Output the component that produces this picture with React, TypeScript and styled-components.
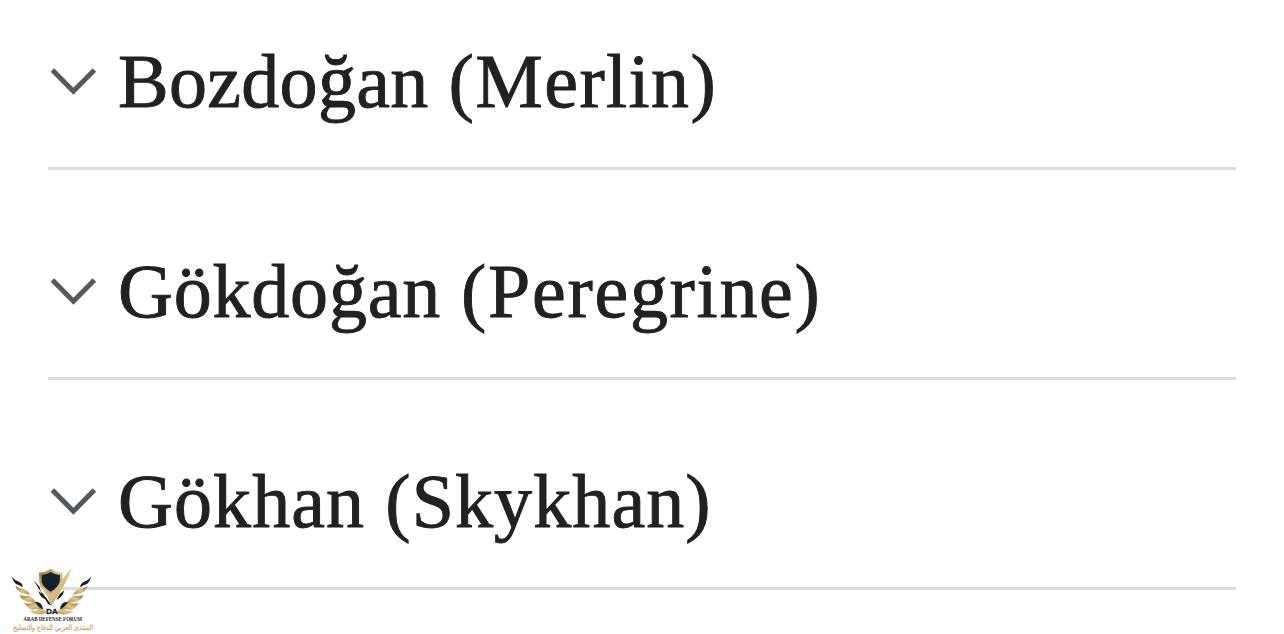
import styled, { createGlobalStyle } from "styled-components";

const theme = {
  colors: {
    text: '#202122',
    icon: '#54595d',
    border: '#dadde0',
    navy: '#14232b',
  },
};

const GlobalStyle = createGlobalStyle`
  body {
    margin: 0;
    background-color: #fff;
    overflow: hidden;
  }
`;

const Page = styled.main`
  position: relative;
  box-sizing: border-box;
  height: 634px;
  padding: 0 48px;
  overflow: hidden;
`;

const SectionHeader = styled.div`
  display: flex;
  align-items: center;
  box-sizing: border-box;
  height: 170px;
  margin-bottom: 40px;
  padding-bottom: 4px;
  border-bottom: 3px solid ${theme.colors.border};
  cursor: pointer;
`;

const ChevronIcon = styled.svg`
  flex: none;
  width: 50px;
  height: 30px;
  margin-right: 20px;
`;

const Title = styled.h2`
  display: flex;
  gap: 20px;
  margin: 0;
  padding-bottom: 2px;
  font-family: Georgia, "Liberation Serif", serif;
  font-size: 76px;
  font-weight: 400;
  line-height: 88px;
  color: ${theme.colors.text};
  -webkit-text-stroke: 0.9px ${theme.colors.text};
  white-space: nowrap;
`;

const Word = styled.span<{
  spacing: number;
}>`
  letter-spacing: ${p => p.spacing}px;
`;

const WatermarkWrapper = styled.svg`
  position: absolute;
  left: 0;
  top: 560px;
  width: 110px;
  height: 74px;
`;

const sections = [
  { name: 'Bozdoğan', alias: '(Merlin)', spacing: 0.3, aliasSpacing: 1.4 },
  { name: 'Gökdoğan', alias: '(Peregrine)', spacing: 0.8, aliasSpacing: 1.7 },
  { name: 'Gökhan', alias: '(Skykhan)', spacing: 1.1, aliasSpacing: 1.1 },
];

const Chevron = () => (
  <ChevronIcon viewBox="0 0 50 30" fill="none" stroke={theme.colors.icon} strokeWidth="5">
    <path d="M4.4 3.1 25.4 24.2 46.4 3.1" />
  </ChevronIcon>
);

const Wing = () => (
  <g>
    <path d="M36 50 Q44 61 57 65 Q69 70 68 82 Q58 75 49 73 Q40 66 36 50Z" fill={theme.colors.navy} />
    <path d="M46 78 Q57 86 72 87 Q87 93 89 106 Q78 100 65 99 Q51 94 46 78Z" fill="url(#gold)" />
    <path d="M59 105 Q73 109 87 107 Q104 114 108 131 Q93 125 79 125 Q64 120 59 105Z" fill="url(#gold)" />
    <path d="M73 129 Q90 133 104 127 Q119 131 127 148 Q112 145 97 150 Q82 145 73 129Z" fill="url(#gold)" />
    <path d="M104 127 Q125 122 130 149 Q116 143 104 127Z" fill={theme.colors.navy} />
    <path d="M88 154 Q105 156 119 147 Q134 146 140 158 Q112 170 88 154Z" fill="url(#gold)" />
  </g>
);

const Watermark = () => (
  <WatermarkWrapper viewBox="0 0 330 222">
    <defs>
      <linearGradient id="gold" x1="0" y1="0" x2="1" y2="1">
        <stop offset="0" stopColor="#8f6c32" />
        <stop offset="0.5" stopColor="#dfc687" />
        <stop offset="1" stopColor="#a8833f" />
      </linearGradient>
    </defs>
    <path d="M101 61 L119 81 122 94 148 126 154 137 144 132 Z" fill={theme.colors.navy} />
    <path d="M115 91 Q118 99 130 102 L141 119 Q119 115 115 91Z" fill={theme.colors.navy} />
    <path d="M192 91 Q189 114 169 119 L179 102Z" fill={theme.colors.navy} />
    <path d="M117 38 Q139 36 152 26 Q166 36 187 38 L187 67 Q181 90 152 105 Q123 91 118 69Z" fill="url(#gold)" />
    <path d="M118 75 Q125 91 153 104 Q184 58 216 23 Q199 71 154 137 Q143 106 118 75Z" fill="url(#gold)" />
    <path d="M125 45 Q141 43 152 36 Q164 43 180 45 L179 67 Q174 84 152 95 Q130 84 125 67Z" fill={theme.colors.navy} />
    <Wing />
    <g transform="translate(309 0) scale(-1 1)">
      <Wing />
    </g>
    <text x="139" y="162" fontFamily="Liberation Sans, sans-serif" fontWeight="700" fontSize="20" textLength="34" lengthAdjust="spacingAndGlyphs" fill={theme.colors.navy} stroke={theme.colors.navy}>DA</text>
    <text x="70" y="182" fontFamily="Liberation Serif, serif" fontWeight="700" fontSize="17" textLength="176" lengthAdjust="spacingAndGlyphs" fill={theme.colors.navy}>ARAB DEFENSE FORUM</text>
    <text x="159" y="209" textAnchor="middle" direction="rtl" fontFamily="DejaVu Sans, sans-serif" fontSize="22" textLength="240" lengthAdjust="spacingAndGlyphs" fill="#c9a45c" stroke="#c9a45c" strokeWidth="0.6">المنتدى العربي للدفاع والتسليح</text>
  </WatermarkWrapper>
);

const App = () => (
  <>
    <GlobalStyle />
    <Page>
      {sections.map(section => (
        <SectionHeader key={section.name}>
          <Chevron />
          <Title>
            <Word spacing={section.spacing}>{section.name}</Word>
            <Word spacing={section.aliasSpacing}>{section.alias}</Word>
          </Title>
        </SectionHeader>
      ))}
      <Watermark />
    </Page>
  </>
);

export default App;
